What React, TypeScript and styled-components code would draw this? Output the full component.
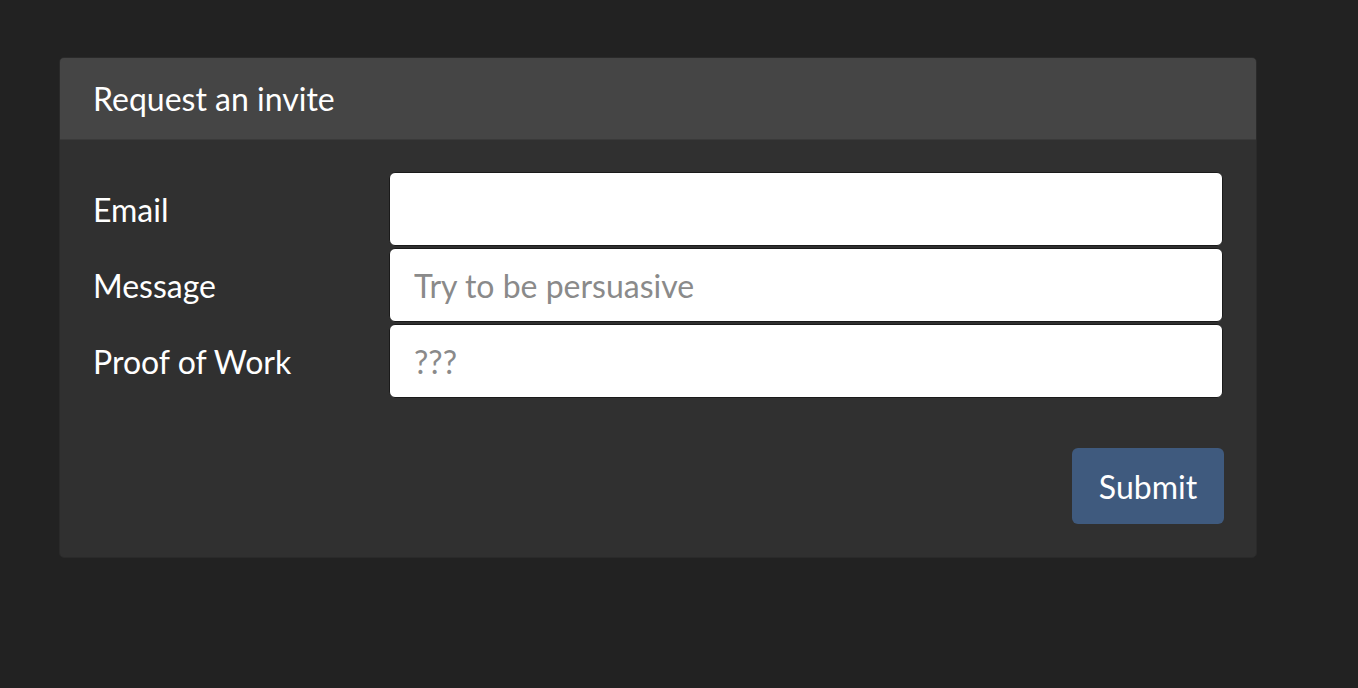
import React from "react";
import styled, { createGlobalStyle } from "styled-components";

const Global = createGlobalStyle`
  html, body { margin: 0; padding: 0; background: #222222; }
  body { font-family: Lato, "Open Sans", sans-serif; color: #ffffff; -webkit-font-smoothing: antialiased; }
  * { box-sizing: border-box; }
`;

const Page = styled.div`
  padding: 57px 101px 0 59px;
`;

const Panel = styled.section`
  width: 1198px;
  background: #303030;
  border: 1px solid #2a2a2a;
  border-radius: 5px;
  overflow: hidden;
`;

const Header = styled.header`
  height: 82px;
  background: #454545;
  border-bottom: 1px solid #3a3a3a;
  padding: 0 33px;
  display: flex;
  align-items: center;
`;

const Title = styled.h3`
  margin: 0;
  font-size: 32px;
  font-weight: 400;
  color: #ffffff;
`;

const Body = styled.form`
  padding: 32px 33px 33px 33px;
  display: flex;
  flex-direction: column;
`;

const Row = styled.div`
  display: grid;
  grid-template-columns: 296px 1fr;
  align-items: center;
  margin-bottom: 2px;
`;

const Label = styled.label`
  font-size: 32px;
  color: #ffffff;
`;

const Input = styled.input`
  height: 74px;
  width: 100%;
  border: 1px solid #1a1a1a;
  border-radius: 6px;
  background: #ffffff;
  padding: 0 24px;
  font-family: Lato, "Open Sans", sans-serif;
  font-size: 32px;
  color: #333;
  outline: none;
  &::placeholder { color: #8a8a8a; }
`;

const Actions = styled.div`
  display: flex;
  justify-content: flex-end;
  margin-top: 48px;
`;

const Button = styled.button`
  width: 152px;
  height: 76px;
  margin-right: -1px;
  border: none;
  border-radius: 6px;
  background: #3f5a7e;
  color: #ffffff;
  font-family: Lato, "Open Sans", sans-serif;
  font-size: 32px;
  cursor: pointer;
`;

export default function App() {
  return (
    <>
      <Global />
      <Page>
        <Panel>
          <Header>
            <Title>Request an invite</Title>
          </Header>
          <Body onSubmit={(e) => e.preventDefault()}>
            <Row>
              <Label htmlFor="email">Email</Label>
              <Input id="email" type="email" />
            </Row>
            <Row>
              <Label htmlFor="message">Message</Label>
              <Input id="message" placeholder="Try to be persuasive" />
            </Row>
            <Row>
              <Label htmlFor="pow">Proof of Work</Label>
              <Input id="pow" placeholder="???" />
            </Row>
            <Actions>
              <Button type="submit">Submit</Button>
            </Actions>
          </Body>
        </Panel>
      </Page>
    </>
  );
}
